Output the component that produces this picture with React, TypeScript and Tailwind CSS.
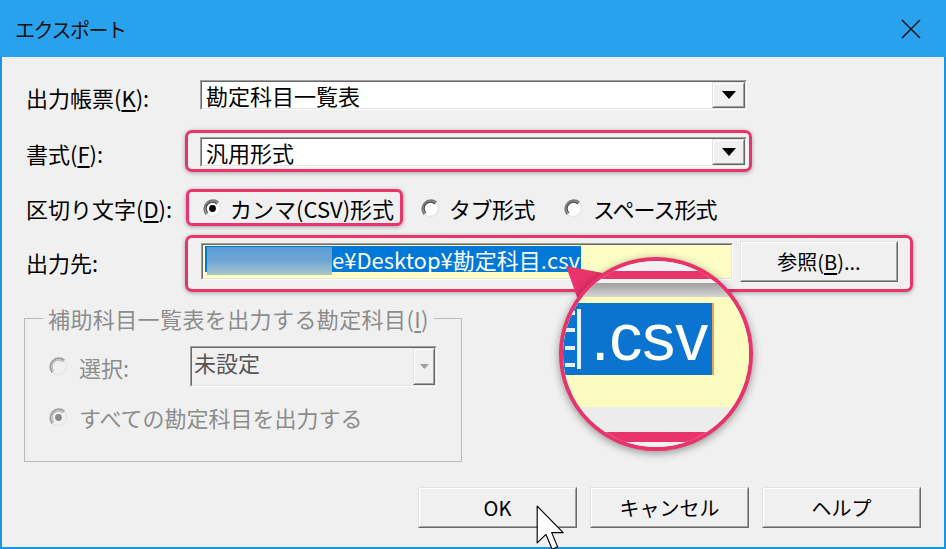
import React from 'react';

const PINK = '#e8336b';

function Sunken({ className = '', inner = '', children }: { className?: string; inner?: string; children?: React.ReactNode }) {
  return (
    <div className={`border border-t-[#a0a0a0] border-l-[#a0a0a0] border-b-white border-r-white ${className}`}>
      <div className={`h-full w-full border border-t-[#696969] border-l-[#696969] border-b-[#e3e3e3] border-r-[#e3e3e3] ${inner}`}>{children}</div>
    </div>
  );
}

function Raised({ className = '', inner = '', children }: { className?: string; inner?: string; children?: React.ReactNode }) {
  return (
    <div className={`border border-t-[#e3e3e3] border-l-[#e3e3e3] border-b-[#696969] border-r-[#696969] ${className}`}>
      <div className={`h-full w-full border border-t-white border-l-white border-b-[#a0a0a0] border-r-[#a0a0a0] ${inner}`}>{children}</div>
    </div>
  );
}

function Radio({ checked = false, disabled = false }: { checked?: boolean; disabled?: boolean }) {
  return (
    <svg width="19" height="19" viewBox="0 0 19 19" className="shrink-0">
      <circle cx="9.5" cy="9.5" r="8.5" fill={disabled ? '#f0f0f0' : '#ffffff'} />
      <path d="M3.5 15.5 A8.5 8.5 0 0 1 15.5 3.5" stroke={disabled ? '#a0a0a0' : '#7a7a7a'} strokeWidth="2" fill="none" />
      <path d="M4.9 14.1 A6.5 6.5 0 0 1 14.1 4.9" stroke={disabled ? '#bdbdbd' : '#4a4a4a'} strokeWidth="1.4" fill="none" />
      <path d="M15.5 3.5 A8.5 8.5 0 0 1 3.5 15.5" stroke="#e6e6e6" strokeWidth="1.6" fill="none" />
      {checked && <circle cx="9.5" cy="9.5" r="3.4" fill={disabled ? '#8a8a8a' : '#000000'} />}
    </svg>
  );
}

function Combo({ text }: { text: string }) {
  return (
    <Sunken className="w-[547px] h-[30px] bg-white" inner="flex items-center">
      <span className="flex-1 pl-[4px] text-[22px] leading-none">{text}</span>
      <Raised className="w-[33px] h-full bg-[#f0f0f0]" inner="flex items-center justify-center">
        <svg width="14" height="8" viewBox="0 0 14 8">
          <path d="M0 0h14L7 8z" fill="#000" />
        </svg>
      </Raised>
    </Sunken>
  );
}

function Btn({ children, w = 'w-[159px]' }: { children: React.ReactNode; w?: string }) {
  return (
    <Raised className={`${w} h-[41px] bg-[#f0f0f0]`} inner="flex items-center justify-center text-[20px] leading-none">
      {children}
    </Raised>
  );
}

export default function App() {
  return (
    <div className="relative w-[946px] h-[549px] overflow-hidden flex flex-col bg-[#1896e4] px-[2px] pb-[2px] text-black font-['Noto_Sans_CJK_JP','Noto_Sans',sans-serif]">
      {/* title bar */}
      <div className="-mx-[2px] h-[57px] shrink-0 bg-[#29a2ee] flex items-center justify-between pl-[15px] pr-[25px]">
        <span className="text-[20px] tracking-[-1.5px] text-[#111] pt-[2px]">エクスポート</span>
        <svg width="20" height="20" viewBox="0 0 20 20">
          <path d="M1 1L19 19M19 1L1 19" stroke="#111" strokeWidth="1.5" />
        </svg>
      </div>

      {/* body */}
      <div className="flex-1 bg-[#f0f0f0] flex flex-col pl-[24px]">
        {/* row 1 */}
        <div className="mt-[23px] h-[30px] flex items-center">
          <div className="w-[174px] text-[22px] leading-none pt-[3px]">
            出力帳票(<span className="underline underline-offset-[3px]">K</span>):
          </div>
          <Combo text="勘定科目一覧表" />
        </div>

        {/* row 2 */}
        <div className="mt-[26px] h-[31px] flex items-center">
          <div className="w-[174px] text-[22px] leading-none pt-[2px]">
            書式(<span className="underline underline-offset-[3px]">F</span>):
          </div>
          <div className="relative">
            <div className="absolute -left-[15px] -right-[5px] -top-[7px] -bottom-[5px] rounded-[7px] border-[3px] border-[#e8336b] shadow-[0_1px_4px_rgba(0,0,0,0.35)]" />
            <Combo text="汎用形式" />
          </div>
        </div>

        {/* row 3 */}
        <div className="mt-[26px] h-[30px] flex items-center">
          <div className="w-[174px] text-[22px] leading-none">
            区切り文字(<span className="underline underline-offset-[3px]">D</span>):
          </div>
          <div className="ml-[3px] flex items-center">
            <div className="relative flex items-center gap-[8px]">
              <div className="absolute -left-[17px] -right-[9px] -top-[8px] -bottom-[7px] rounded-[6px] border-[3px] border-[#e8336b] shadow-[0_1px_4px_rgba(0,0,0,0.35)]" />
              <Radio checked />
              <span className="text-[22px] leading-none">カンマ(CSV)形式</span>
            </div>
            <div className="ml-[27px] flex items-center gap-[9px]">
              <Radio />
              <span className="text-[22px] leading-none tracking-[-0.5px]">タブ形式</span>
            </div>
            <div className="ml-[29px] flex items-center gap-[10px]">
              <Radio />
              <span className="text-[22px] leading-none tracking-[-1px]">スペース形式</span>
            </div>
          </div>
        </div>

        {/* row 4 */}
        <div className="mt-[18px] h-[41px] flex items-center">
          <div className="w-[174px] text-[22px] leading-none">出力先:</div>
          <div className="relative flex items-center">
            <div className="absolute -left-[15px] -right-[15px] -top-[6px] -bottom-[10px] rounded-[7px] border-[3px] border-[#e8336b] shadow-[0_1px_4px_rgba(0,0,0,0.35)]" />
            <Sunken className="ml-[1px] w-[532px] h-[37px] bg-[#fdfdc5]" inner="flex items-start pl-[2px] pt-[1px]">
              <div className="h-[26px] bg-[#0078d7] flex items-center pl-[2px] pr-[1px]">
                <div className="w-[125px] h-[28px] mt-[4px] bg-gradient-to-b from-[#5a9dd8] via-[#6fa6d4] to-[#a9c7c6]" />
                <span className="text-white text-[22px] leading-none whitespace-nowrap">e¥Desktop¥勘定科目.csv</span>
              </div>
            </Sunken>
            <div className="ml-[7px]">
              <Btn w="w-[158px]">
                参照(<span className="underline underline-offset-[3px]">B</span>)...
              </Btn>
            </div>
          </div>
        </div>

        {/* group box */}
        <fieldset className="-ml-[2px] mt-[23px] w-[438px] h-[157px] border border-[#b9b9b9] flex flex-col">
          <legend className="ml-[18px] px-[5px] text-[22px] leading-[26px] text-[#8c8c8c] tracking-[0.4px]">
            補助科目一覧表を出力する勘定科目(<span className="underline underline-offset-[3px]">I</span>)
          </legend>
          <div className="mt-[15px] pl-[24px] flex items-center">
            <div className="w-[141px] flex items-center gap-[11px] text-[#8c8c8c]">
              <Radio disabled />
              <span className="text-[22px] leading-none">選択:</span>
            </div>
            <Sunken className="w-[247px] h-[41px] bg-[#f0f0f0]" inner="flex items-stretch">
              <span className="flex-1 pl-[2px] pt-[3px] text-[22px] leading-none text-[#555]">未設定</span>
              <Raised className="w-[22px] bg-[#f0f0f0]" inner="flex items-center justify-center">
                <svg width="9" height="5" viewBox="0 0 9 5">
                  <path d="M0 0h9L4.5 5z" fill="#a0a0a0" />
                </svg>
              </Raised>
            </Sunken>
          </div>
          <div className="mt-[19px] pl-[24px] flex items-center gap-[11px] text-[#8c8c8c]">
            <Radio checked disabled />
            <span className="text-[22px] leading-none">すべての勘定科目を出力する</span>
          </div>
        </fieldset>

        {/* buttons */}
        <div className="mt-[25px] mr-[23px] flex justify-end gap-[13px]">
          <Btn>OK</Btn>
          <Btn>キャンセル</Btn>
          <Btn>ヘルプ</Btn>
        </div>
      </div>

      {/* magnifier pointer */}
      <svg className="absolute left-[560px] top-[260px]" width="50" height="45" viewBox="0 0 50 45">
        <polygon points="6,6 18,40 48,14" fill={PINK} />
      </svg>

      {/* magnifier */}
      <div className="absolute left-[559px] top-[257px] w-[194px] h-[194px] rounded-full border-[4px] border-[#e8336b] overflow-hidden shadow-[0_2px_8px_rgba(0,0,0,0.4)] flex flex-col bg-[#f2f2f2]">
        <div className="h-[10px] bg-[#f2f2f2]" />
        <div className="h-[8px] bg-[#e8336b] blur-[0.5px]" />
        <div className="h-[4px] bg-[#f2f2f2]" />
        <div className="h-[14px] bg-gradient-to-b from-[#9f9f9f] to-[#d6d6d6]" />
        <div className="h-[110px] bg-[#fdfcc0] flex flex-col">
          <div className="mt-[6px] h-[72px] w-[151px] bg-[#0a74d0] border-r-[2px] border-r-[#e8a050] flex items-center">
            <div className="ml-[2px] flex flex-col justify-between h-[56px] w-[10px]">
              <div className="h-[4px] bg-white/90" />
              <div className="h-[4px] bg-white/90" />
              <div className="h-[4px] bg-white/90" />
              <div className="h-[4px] bg-white/90" />
            </div>
            <div className="ml-[2px] w-[4px] h-[60px] bg-white/90" />
            <span className="ml-[10px] text-white text-[66px] leading-none font-['Liberation_Sans',sans-serif] blur-[0.6px] -mt-[4px]">.csv</span>
          </div>
        </div>
        <div className="h-[25px] bg-[#ececec]" />
        <div className="h-[10px] bg-[#e8336b] blur-[0.5px]" />
        <div className="flex-1 bg-[#f2f2f2]" />
      </div>

      {/* mouse cursor */}
      <svg className="absolute left-[536px] top-[505px]" width="30" height="46" viewBox="0 0 13 20">
        <path d="M0.5 0.5 L0.5 16.5 L4.3 12.8 L7 19.2 L9.4 18.2 L6.8 12 L11.8 12 Z" fill="#fff" stroke="#000" strokeWidth="0.5" strokeLinejoin="round" />
      </svg>
    </div>
  );
}
